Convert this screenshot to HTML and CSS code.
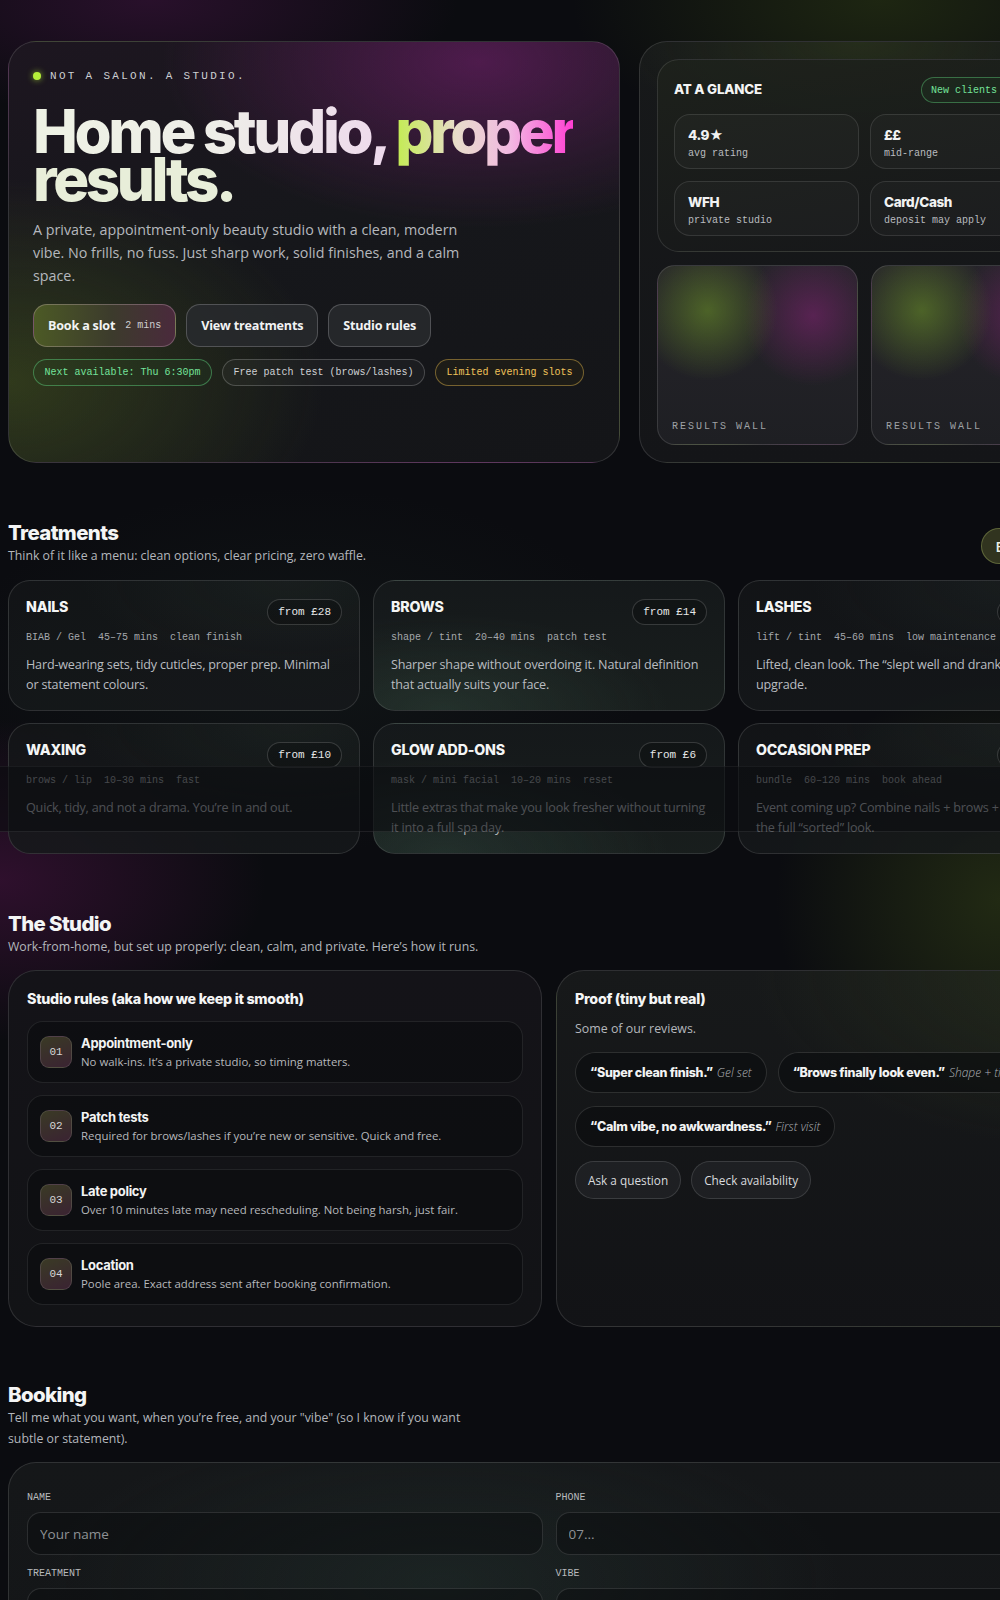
FILE: index.html
```html
<!DOCTYPE html>
<html lang="en">
<head>
<meta charset="utf-8">
<title>Home studio, proper results.</title>
<link rel="stylesheet" href="styles.css">
</head>
<body>
<div class="veil"></div>
<main class="wrap">
  <section class="hero">
    <div class="hero-card">
      <div class="kicker"><span class="dot"></span>NOT A SALON. A STUDIO.</div>
      <h1 class="title"><span class="t1">Home studio, </span><span class="t2">proper</span><br><span class="t3">results.</span></h1>
      <p class="lede">A private, appointment-only beauty studio with a clean, modern vibe. No frills, no fuss. Just sharp work, solid finishes, and a calm space.</p>
      <div class="actions">
        <a class="btn btn-primary">Book a slot <span class="mono-note">2 mins</span></a>
        <a class="btn">View treatments</a>
        <a class="btn">Studio rules</a>
      </div>
      <div class="chips">
        <span class="chip chip-green">Next available: Thu 6:30pm</span>
        <span class="chip">Free patch test (brows/lashes)</span>
        <span class="chip chip-amber">Limited evening slots</span>
      </div>
    </div>
    <div class="side-card">
      <div class="glance">
        <div class="glance-head">
          <h2>AT A GLANCE</h2>
          <span class="badge">New clients welcome</span>
        </div>
        <div class="stats">
          <div class="stat"><b>4.9★</b><span>avg rating</span></div>
          <div class="stat"><b>££</b><span>mid-range</span></div>
          <div class="stat"><b>WFH</b><span>private studio</span></div>
          <div class="stat"><b>Card/Cash</b><span>deposit may apply</span></div>
        </div>
      </div>
      <div class="tiles">
        <div class="tile"><span>RESULTS WALL</span></div>
        <div class="tile"><span>RESULTS WALL</span></div>
      </div>
    </div>
  </section>

  <section class="block">
    <div class="block-head">
      <div>
        <h2 class="h2">Treatments</h2>
        <p class="sub">Think of it like a menu: clean options, clear pricing, zero waffle.</p>
      </div>
      <a class="btn-book">Book a slot</a>
    </div>
    <div class="grid3">
      <article class="treat">
        <div class="treat-top"><h3>NAILS</h3><span class="price">from £28</span></div>
        <div class="meta">BIAB / Gel&nbsp; 45–75 mins&nbsp; clean finish</div>
        <p>Hard-wearing sets, tidy cuticles, proper prep. Minimal or statement colours.</p>
      </article>
      <article class="treat g2">
        <div class="treat-top"><h3>BROWS</h3><span class="price">from £14</span></div>
        <div class="meta">shape / tint&nbsp; 20–40 mins&nbsp; patch test</div>
        <p>Sharper shape without overdoing it. Natural definition that actually suits your face.</p>
      </article>
      <article class="treat">
        <div class="treat-top"><h3>LASHES</h3><span class="price">from £30</span></div>
        <div class="meta">lift / tint&nbsp; 45–60 mins&nbsp; low maintenance</div>
        <p>Lifted, clean look. The “slept well and drank water” upgrade.</p>
      </article>
      <article class="treat">
        <div class="treat-top"><h3>WAXING</h3><span class="price">from £10</span></div>
        <div class="meta">brows / lip&nbsp; 10–30 mins&nbsp; fast</div>
        <p>Quick, tidy, and not a drama. You’re in and out.</p>
      </article>
      <article class="treat g2">
        <div class="treat-top"><h3>GLOW ADD-ONS</h3><span class="price">from £6</span></div>
        <div class="meta">mask / mini facial&nbsp; 10–20 mins&nbsp; reset</div>
        <p>Little extras that make you look fresher without turning it into a full spa day.</p>
      </article>
      <article class="treat">
        <div class="treat-top"><h3>OCCASION PREP</h3><span class="price">from £45</span></div>
        <div class="meta">bundle&nbsp; 60–120 mins&nbsp; book ahead</div>
        <p>Event coming up? Combine nails + brows + lashes for the full “sorted” look.</p>
      </article>
    </div>
  </section>

  <section class="block">
    <div class="block-head">
      <div>
        <h2 class="h2">The Studio</h2>
        <p class="sub">Work-from-home, but set up properly: clean, calm, and private. Here’s how it runs.</p>
      </div>
    </div>
    <div class="grid2">
      <div class="panel">
        <h3 class="panel-title">Studio rules (aka how we keep it smooth)</h3>
        <ol class="rules">
          <li><span class="num">01</span><div><b>Appointment-only</b><span>No walk-ins. It’s a private studio, so timing matters.</span></div></li>
          <li><span class="num">02</span><div><b>Patch tests</b><span>Required for brows/lashes if you’re new or sensitive. Quick and free.</span></div></li>
          <li><span class="num">03</span><div><b>Late policy</b><span>Over 10 minutes late may need rescheduling. Not being harsh, just fair.</span></div></li>
          <li><span class="num">04</span><div><b>Location</b><span>Poole area. Exact address sent after booking confirmation.</span></div></li>
        </ol>
      </div>
      <div class="panel panel-proof">
        <h3 class="panel-title">Proof (tiny but real)</h3>
        <p class="proof-sub">Some of our reviews.</p>
        <div class="reviews">
          <span class="review"><b>“Super clean finish.”</b> <i>Gel set</i></span>
          <span class="review"><b>“Brows finally look even.”</b> <i>Shape + tint</i></span>
          <span class="review"><b>“Calm vibe, no awkwardness.”</b> <i>First visit</i></span>
        </div>
        <div class="ghost-row">
          <a class="ghost">Ask a question</a>
          <a class="ghost">Check availability</a>
        </div>
      </div>
    </div>
  </section>

  <section class="block block-last">
    <div class="block-head">
      <div>
        <h2 class="h2">Booking</h2>
        <p class="sub narrow">Tell me what you want, when you’re free, and your "vibe" (so I know if you want subtle or statement).</p>
      </div>
    </div>
    <form class="form">
      <label class="field"><span>NAME</span><input type="text" placeholder="Your name"></label>
      <label class="field"><span>PHONE</span><input type="text" placeholder="07..."></label>
      <label class="field"><span>TREATMENT</span><input type="text" placeholder=""></label>
      <label class="field"><span>VIBE</span><input type="text" placeholder=""></label>
    </form>
  </section>
</main>
</body>
</html>
```

FILE: styles.css
```css
* { box-sizing: border-box; }
html, body { margin: 0; padding: 0; }
body {
  position: relative;
  overflow-x: hidden;
  min-height: 1700px;
  color: #eceef0;
  font-family: "Open Sans", "Noto Sans", sans-serif;
  background-color: #0b0c10;
  background-image:
    radial-gradient(ellipse 440px 170px at 150px 0px, rgba(70, 20, 70, 0.5), transparent 70%),
    radial-gradient(ellipse 440px 220px at 880px 0px, rgba(60, 80, 20, 0.38), transparent 70%),
    radial-gradient(ellipse 380px 230px at 0px 880px, rgba(90, 20, 80, 0.45), transparent 70%),
    radial-gradient(ellipse 320px 320px at 1000px 900px, rgba(70, 90, 25, 0.38), transparent 70%),
    radial-gradient(ellipse 500px 260px at 300px 670px, rgba(40, 60, 50, 0.18), transparent 70%);
  background-repeat: no-repeat;
}
a { color: inherit; text-decoration: none; }

.veil {
  position: absolute;
  left: 0;
  top: 766px;
  width: 100%;
  height: 66px;
  background: rgba(12, 13, 16, 0.62);
  border-top: 1px solid rgba(255, 255, 255, 0.05);
  border-bottom: 1px solid rgba(255, 255, 255, 0.08);
  z-index: 5;
}

.wrap {
  width: 1082px;
  margin-left: 8px;
  padding-top: 41px;
}

/* HERO */
.hero {
  display: grid;
  grid-template-columns: 612px 451px;
  gap: 19px;
}
.hero-card {
  height: 422px;
  border-radius: 28px;
  border: 1px solid rgba(255, 255, 255, 0.13);
  padding: 25px 24px;
  background:
    radial-gradient(ellipse 440px 230px at 470px 20px, rgba(110, 30, 105, 0.62), transparent 72%),
    radial-gradient(ellipse 420px 270px at 0px 340px, rgba(80, 100, 30, 0.45), transparent 75%),
    linear-gradient(165deg, #1d1620 0%, #16171b 45%, #141518 100%);
}
.kicker {
  display: flex;
  align-items: center;
  gap: 9px;
  font-family: "Liberation Mono", "DejaVu Sans Mono", monospace;
  font-size: 11px;
  letter-spacing: 2.3px;
  color: #cdd0d3;
  height: 18px;
}
.dot {
  width: 8px; height: 8px; border-radius: 50%;
  background: #b6f03a;
  box-shadow: 0 0 6px rgba(182, 240, 58, 0.7);
}
.title {
  margin: 22px 0 0;
  font-family: "Inter", "Lato", sans-serif;
  font-weight: 800;
  font-size: 60px;
  line-height: 48px;
  letter-spacing: -3.4px;
  color: #eaf0dc;
}
.t1 {
  background: linear-gradient(90deg, #eef2e4 0%, #eeeee8 50%, #eed8ec 100%);
  -webkit-background-clip: text;
  background-clip: text;
  color: transparent;
}
.t2 {
  background: linear-gradient(90deg, #c2ec50 0%, #e8dccb 35%, #f2b8e2 65%, #ff3fd2 100%);
  -webkit-background-clip: text;
  background-clip: text;
  color: transparent;
}
.t3 { color: #e8eed9; }
.lede {
  margin: 15px 0 0;
  max-width: 440px;
  font-size: 14.3px;
  line-height: 23px;
  color: #b5b8bd;
}
.actions {
  display: flex;
  gap: 10px;
  margin-top: 17px;
}
.btn {
  display: inline-flex;
  align-items: center;
  gap: 10px;
  height: 43px;
  padding: 0 14px;
  border-radius: 14px;
  border: 1px solid rgba(255, 255, 255, 0.2);
  background: rgba(40, 42, 46, 0.85);
  font-weight: 700;
  font-size: 12.6px;
  letter-spacing: -0.2px;
  color: #f2f3f4;
}
.btn-primary {
  background: linear-gradient(90deg, #4c5a25 0%, #3c3b2c 55%, #4a2a3c 100%);
  border-color: rgba(255, 220, 240, 0.25);
}
.mono-note {
  font-family: "Liberation Mono", "DejaVu Sans Mono", monospace;
  font-weight: 400;
  font-size: 10px;
  color: #cfcfd0;
  letter-spacing: 0;
}
.chips {
  display: flex;
  gap: 10px;
  margin-top: 12px;
}
.chip {
  display: inline-flex;
  align-items: center;
  height: 27px;
  padding: 0 10.5px;
  border-radius: 14px;
  border: 1px solid rgba(255, 255, 255, 0.2);
  background: rgba(255, 255, 255, 0.03);
  font-family: "Liberation Mono", "DejaVu Sans Mono", monospace;
  font-size: 10px;
  color: #cfd1d4;
}
.chip-green {
  color: #74e39a;
  border-color: rgba(90, 200, 120, 0.5);
  background: rgba(40, 90, 50, 0.15);
}
.chip-amber {
  color: #f0c35a;
  border-color: rgba(210, 170, 70, 0.5);
  background: rgba(90, 70, 20, 0.12);
}

.side-card {
  height: 422px;
  border-radius: 28px;
  border: 1px solid rgba(255, 255, 255, 0.12);
  padding: 17px 17px;
  background:
    radial-gradient(ellipse 320px 130px at 220px 0px, rgba(70, 90, 30, 0.3), transparent 75%),
    linear-gradient(180deg, #17191a, #141518);
  display: flex;
  flex-direction: column;
  gap: 13px;
}
.glance {
  height: 193px;
  flex: none;
  border-radius: 22px;
  border: 1px solid rgba(255, 255, 255, 0.11);
  padding: 17px 16px 15px;
  background: linear-gradient(170deg, rgba(30, 34, 28, 0.9), rgba(22, 23, 26, 0.9));
}
.glance-head {
  display: flex;
  justify-content: space-between;
  align-items: center;
  height: 26px;
  margin-bottom: 11px;
}
.glance-head h2 {
  margin: -2px 0 0;
  font-family: "Inter", sans-serif;
  font-weight: 800;
  font-size: 13.3px;
  letter-spacing: -0.2px;
  color: #f3f4f4;
}
.badge {
  display: inline-flex;
  align-items: center;
  height: 26px;
  padding: 0 9px;
  border-radius: 13px;
  border: 1px solid rgba(90, 200, 120, 0.45);
  background: rgba(40, 90, 50, 0.15);
  font-family: "Liberation Mono", "DejaVu Sans Mono", monospace;
  font-size: 10px;
  color: #74e39a;
  white-space: nowrap;
}
.stats {
  display: grid;
  grid-template-columns: 1fr 1fr;
  gap: 12px 11px;
}
.stat {
  height: 55px;
  border-radius: 16px;
  border: 1px solid rgba(255, 255, 255, 0.11);
  background: rgba(255, 255, 255, 0.025);
  padding: 11px 13px;
  display: flex;
  flex-direction: column;
}
.stat b {
  font-family: "Inter", sans-serif;
  font-weight: 800;
  font-size: 13.5px;
  line-height: 18px;
  letter-spacing: -0.4px;
  color: #f1f2f2;
}
.stat span {
  margin-top: 3px;
  font-family: "Liberation Mono", "DejaVu Sans Mono", monospace;
  font-size: 10px;
  line-height: 14px;
  color: #b9bbbf;
}
.tiles {
  display: grid;
  grid-template-columns: 1fr 1fr;
  gap: 13px;
  flex: 1;
}
.tile {
  border-radius: 18px;
  border: 1px solid rgba(255, 255, 255, 0.12);
  background:
    radial-gradient(circle 70px at 25% 25%, rgba(90, 120, 40, 0.75), transparent 100%),
    radial-gradient(circle 70px at 78% 28%, rgba(110, 35, 100, 0.7), transparent 100%),
    linear-gradient(180deg, #26242a, #1e1f23);
  display: flex;
  align-items: flex-end;
  padding: 0 14px 12px;
}
.tile span {
  font-family: "Liberation Mono", "DejaVu Sans Mono", monospace;
  font-size: 10px;
  letter-spacing: 2px;
  color: #9fa2a6;
}

/* SECTIONS */
.block { margin-top: 57px; }
.block-last { margin-top: 55px; }
.block-head {
  display: flex;
  justify-content: space-between;
  align-items: center;
  margin-bottom: 13px;
}
.h2 {
  margin: 0;
  font-family: "Inter", sans-serif;
  font-weight: 800;
  font-size: 20.4px;
  letter-spacing: -0.6px;
  line-height: 26px;
  color: #f4f5f5;
}
.sub {
  margin: 0;
  font-size: 12.3px;
  line-height: 20.5px;
  color: #b4b7bc;
}
.sub.narrow { max-width: 470px; }
.btn-book {
  display: inline-flex;
  align-items: center;
  height: 36px;
  padding: 0 19px 0 13px;
  border-radius: 18px;
  border: 1px solid rgba(200, 220, 120, 0.3);
  background: #31341f;
  font-weight: 600;
  font-size: 14px;
  color: #eef0e4;
  margin-top: 6px;
}

.grid3 {
  display: grid;
  grid-template-columns: repeat(3, minmax(0, 1fr));
  gap: 12px 13px;
}
.treat {
  height: 131px;
  border-radius: 22px;
  border: 1px solid rgba(255, 255, 255, 0.12);
  padding: 16px 17px;
  background:
    radial-gradient(ellipse 260px 110px at 80% 0%, rgba(60, 80, 70, 0.15), transparent 80%),
    linear-gradient(180deg, rgba(20, 22, 24, 0.85), rgba(22, 25, 27, 0.85));
}
.treat.g2 {
  background:
    radial-gradient(ellipse 280px 120px at 20% 100%, rgba(60, 90, 75, 0.3), transparent 80%),
    linear-gradient(180deg, rgba(22, 26, 28, 0.9), rgba(26, 32, 31, 0.9));
}
.treat-top {
  display: flex;
  justify-content: space-between;
  align-items: flex-start;
  height: 28px;
}
.treat h3 {
  margin: 0;
  font-family: "Inter", sans-serif;
  font-weight: 800;
  font-size: 14.2px;
  line-height: 20px;
  letter-spacing: -0.2px;
  color: #f4f5f5;
}
.price {
  margin-top: 2px;
  display: inline-flex;
  align-items: center;
  height: 26px;
  padding: 0 10px;
  border-radius: 13px;
  border: 1px solid rgba(255, 255, 255, 0.16);
  background: rgba(0, 0, 0, 0.2);
  font-family: "Liberation Mono", "DejaVu Sans Mono", monospace;
  font-size: 11px;
  color: #e6e7e8;
}
.meta {
  margin-top: 6px;
  font-family: "Liberation Mono", "DejaVu Sans Mono", monospace;
  font-size: 10px;
  line-height: 14px;
  color: #a4a7ab;
}
.treat p {
  margin: 10px 0 0;
  font-size: 12.6px;
  line-height: 20.5px;
  letter-spacing: -0.18px;
  color: #b9bcc0;
}

.grid2 {
  display: grid;
  grid-template-columns: repeat(2, minmax(0, 1fr));
  gap: 14px;
}
.panel {
  height: 357px;
  border-radius: 28px;
  border: 1px solid rgba(255, 255, 255, 0.12);
  padding: 18px 18px;
  background: linear-gradient(180deg, #141318, #121316);
}
.panel-proof {
  background:
    radial-gradient(ellipse 420px 220px at 100% 0%, rgba(60, 75, 30, 0.35), transparent 80%),
    linear-gradient(180deg, #17191a, #121316);
}
.panel-title {
  margin: 0;
  font-family: "Inter", sans-serif;
  font-weight: 800;
  font-size: 14.3px;
  letter-spacing: -0.3px;
  line-height: 20px;
  color: #f4f5f5;
}
.rules {
  list-style: none;
  margin: 12px 0 0;
  padding: 0;
  display: flex;
  flex-direction: column;
  gap: 12px;
}
.rules li {
  height: 62px;
  border-radius: 16px;
  border: 1px solid rgba(255, 255, 255, 0.09);
  background: rgba(8, 9, 12, 0.5);
  display: flex;
  align-items: center;
  gap: 9px;
  padding: 0 12px;
}
.num {
  width: 32px; height: 32px;
  flex: none;
  border-radius: 9px;
  border: 1px solid rgba(255, 255, 255, 0.12);
  background: linear-gradient(160deg, #3a3a25, #3a2332);
  display: flex;
  align-items: center;
  justify-content: center;
  font-family: "Liberation Mono", "DejaVu Sans Mono", monospace;
  font-size: 11px;
  color: #d6d6d6;
}
.rules li div { display: flex; flex-direction: column; gap: 3px; }
.rules b {
  font-family: "Inter", sans-serif;
  font-weight: 700;
  font-size: 13px;
  letter-spacing: -0.3px;
  color: #f2f3f3;
}
.rules li div span {
  font-size: 11.4px;
  color: #b6b8bc;
}
.proof-sub {
  margin: 10px 0 0;
  font-size: 12.4px;
  line-height: 20px;
  color: #b4b7bc;
}
.reviews {
  display: flex;
  flex-wrap: wrap;
  gap: 13px 11px;
  margin-top: 13px;
}
.review {
  display: inline-flex;
  align-items: center;
  gap: 4px;
  height: 41px;
  padding: 0 14px;
  border-radius: 21px;
  border: 1px solid rgba(255, 255, 255, 0.13);
  background: rgba(10, 11, 13, 0.6);
  font-size: 12.5px;
  white-space: nowrap;
}
.review b {
  font-family: "Inter", sans-serif;
  font-weight: 800;
  letter-spacing: -0.3px;
  color: #f2f3f3;
}
.review i { color: #aeb1b5; font-weight: 300; font-size: 12px; }
.ghost-row { display: flex; gap: 10px; margin-top: 14px; }
.ghost {
  display: inline-flex;
  align-items: center;
  height: 38px;
  padding: 0 12px;
  border-radius: 19px;
  border: 1px solid rgba(255, 255, 255, 0.13);
  background: rgba(40, 42, 46, 0.5);
  font-size: 11.8px;
  color: #d9dbde;
}

.form {
  border-radius: 28px;
  border: 1px solid rgba(255, 255, 255, 0.12);
  padding: 29px 18px 30px;
  display: grid;
  grid-template-columns: repeat(2, minmax(0, 1fr));
  gap: 13px 13px;
  background:
    radial-gradient(ellipse 500px 200px at 40% 60%, rgba(40, 60, 55, 0.35), transparent 80%),
    linear-gradient(180deg, #151719, #141618);
}
.field { display: flex; flex-direction: column; gap: 8px; }
.field span {
  font-family: "Liberation Mono", "DejaVu Sans Mono", monospace;
  font-size: 10px;
  line-height: 12px;
  color: #b8babd;
}
.field input {
  height: 43px;
  border-radius: 14px;
  border: 1px solid rgba(255, 255, 255, 0.12);
  background: rgba(10, 11, 13, 0.5);
  padding: 0 12px;
  font-family: "Open Sans", sans-serif;
  font-size: 13.5px;
  color: #e8e9ea;
  outline: none;
}
.field input::placeholder { color: #8e9195; }
```
